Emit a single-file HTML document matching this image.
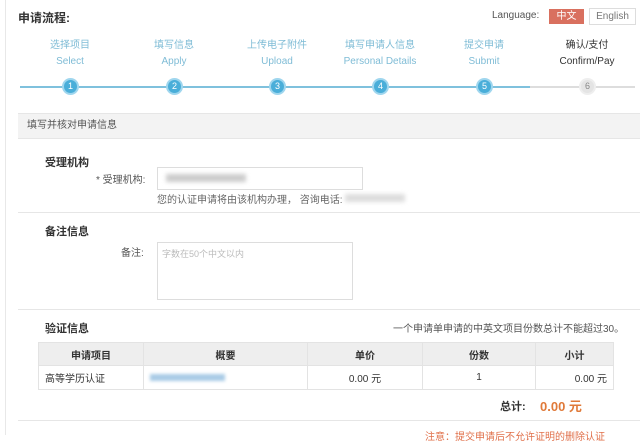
<!DOCTYPE html>
<html><head><meta charset="utf-8"><style>
*{margin:0;padding:0;box-sizing:border-box}
body{width:640px;height:435px;overflow:hidden;background:#fff;font-family:"Liberation Sans","Noto Sans CJK SC",sans-serif;font-size:11px;color:#333;position:relative}
.a{position:absolute;white-space:nowrap}
.st{position:absolute;width:100px;text-align:center;color:#7fbcd6;font-size:10px;line-height:16px}
.c{position:absolute;top:78px;width:17px;height:17px;border-radius:50%;background:#4aaed9;border:2px solid #9fd6ee;color:#fff;font-size:9px;text-align:center;line-height:13px}
.hr{position:absolute;left:18px;right:0;height:1px;background:#e6e6e6}
.b{font-weight:bold;color:#333}
table{position:absolute;left:38px;top:342px;width:576px;border-collapse:collapse;font-size:10px}
td,th{border:1px solid #e3e3e3;height:24px;padding:0 6px}
th{background:#eee;font-weight:bold;text-align:center;height:23px}
</style></head><body>
<div class="a" style="left:5px;top:0;width:1px;height:435px;background:#e8e8e8"></div>
<div class="a b" style="left:18px;top:9px;font-size:12px">申请流程:</div>
<div class="a" style="left:492px;top:10px;color:#555;font-size:10px">Language:</div>
<div class="a" style="left:549px;top:9px;width:35px;height:15px;background:#d9705f;color:#fff;text-align:center;line-height:15px;font-size:10px">中文</div>
<div class="a" style="left:589px;top:8px;width:47px;height:17px;border:1px solid #ddd;color:#777;line-height:15px;text-align:center;font-size:10px">English</div>

<div class="a" style="left:20px;top:86px;width:510px;height:2px;background:#7fc1dd"></div>
<div class="a" style="left:530px;top:86px;width:105px;height:2px;background:#ddd"></div>
<div class="st" style="left:20px;top:38px">选择项目<br>Select</div>
<div class="st" style="left:124px;top:38px">填写信息<br>Apply</div>
<div class="st" style="left:227px;top:38px">上传电子附件<br>Upload</div>
<div class="st" style="left:330px;top:38px">填写申请人信息<br>Personal Details</div>
<div class="st" style="left:434px;top:38px">提交申请<br>Submit</div>
<div class="st" style="left:537px;top:38px;color:#333">确认/支付<br>Confirm/Pay</div>
<div class="c" style="left:62px">1</div>
<div class="c" style="left:166px">2</div>
<div class="c" style="left:269px">3</div>
<div class="c" style="left:372px">4</div>
<div class="c" style="left:476px">5</div>
<div class="c" style="left:579px;background:#e4e4e4;border-color:#eee;color:#888">6</div>

<div class="a" style="left:18px;top:113px;width:622px;height:26px;background:#f3f3f3;border-top:1px solid #e6e6e6;border-bottom:1px solid #e6e6e6;padding-left:9px;line-height:24px;font-size:10px;color:#555">填写并核对申请信息</div>
<div class="a b" style="left:45px;top:154px">受理机构</div>
<div class="a" style="left:96px;top:171px;font-size:10px;color:#555">* 受理机构:</div>
<div class="a" style="left:157px;top:167px;width:206px;height:23px;border:1px solid #ddd"></div>
<div class="a" style="left:166px;top:174px;width:80px;height:8px;background:#ccc;filter:blur(2px)"></div>
<div class="a" style="left:157px;top:191px;font-size:10px;color:#666">您的认证申请将由该机构办理， 咨询电话:</div>
<div class="a" style="left:345px;top:194px;width:60px;height:8px;background:#ddd;filter:blur(2px)"></div>
<div class="hr" style="top:212px"></div>
<div class="a b" style="left:45px;top:223px">备注信息</div>
<div class="a" style="left:121px;top:244px;font-size:10px;color:#555">备注:</div>
<div class="a" style="left:157px;top:242px;width:196px;height:58px;border:1px solid #ddd;padding:4px;font-size:9px;color:#bbb">字数在50个中文以内</div>
<div class="hr" style="top:309px"></div>
<div class="a b" style="left:45px;top:320px">验证信息</div>
<div class="a" style="left:393px;top:320px;font-size:10px;color:#555">一个申请单申请的中英文项目份数总计不能超过30。</div>
<table>
<tr><th style="width:105px">申请项目</th><th style="width:164px">概要</th><th style="width:115px">单价</th><th style="width:113px">份数</th><th>小计</th></tr>
<tr><td>高等学历认证</td><td><div style="width:75px;height:7px;background:#a9cbe6;filter:blur(1.5px)"></div></td><td style="text-align:center">0.00 元</td><td style="text-align:center">1</td><td style="text-align:right">0.00 元</td></tr>
</table>
<div class="a b" style="left:500px;top:398px">总计:</div>
<div class="a" style="left:540px;top:396px;color:#e07a3a;font-weight:bold;font-size:13px">0.00 元</div>
<div class="hr" style="top:420px"></div>
<div class="a" style="left:425px;top:428px;color:#e0704a;font-size:10px">注意：提交申请后不允许证明的删除认证</div>
</body></html>
